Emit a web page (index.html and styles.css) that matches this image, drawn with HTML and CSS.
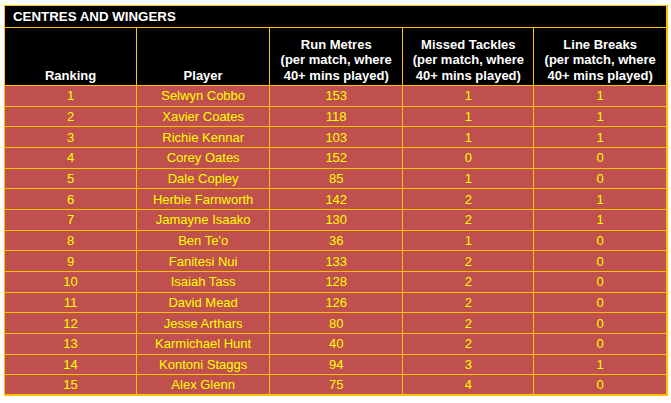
FILE: index.html
```html
<!DOCTYPE html>
<html>
<head>
<meta charset="utf-8">
<link rel="stylesheet" href="styles.css">
</head>
<body>
<table class="stats">
  <colgroup>
    <col class="c1"><col class="c2"><col class="c3"><col class="c4"><col class="c5">
  </colgroup>
  <thead>
    <tr class="title-row"><th colspan="5" class="title">CENTRES AND WINGERS</th></tr>
    <tr class="head-row">
      <th>Ranking</th>
      <th>Player</th>
      <th>Run Metres<br>(per match, where<br>40+ mins played)</th>
      <th>Missed Tackles<br>(per match, where<br>40+ mins played)</th>
      <th class="last">Line Breaks<br>(per match, where<br>40+ mins played)</th>
    </tr>
  </thead>
  <tbody>
    <tr><td>1</td><td>Selwyn Cobbo</td><td>153</td><td>1</td><td class="last">1</td></tr>
    <tr><td>2</td><td>Xavier Coates</td><td>118</td><td>1</td><td class="last">1</td></tr>
    <tr><td>3</td><td>Richie Kennar</td><td>103</td><td>1</td><td class="last">1</td></tr>
    <tr><td>4</td><td>Corey Oates</td><td>152</td><td>0</td><td class="last">0</td></tr>
    <tr><td>5</td><td>Dale Copley</td><td>85</td><td>1</td><td class="last">0</td></tr>
    <tr><td>6</td><td>Herbie Farnworth</td><td>142</td><td>2</td><td class="last">1</td></tr>
    <tr><td>7</td><td>Jamayne Isaako</td><td>130</td><td>2</td><td class="last">1</td></tr>
    <tr><td>8</td><td>Ben Te'o</td><td>36</td><td>1</td><td class="last">0</td></tr>
    <tr><td>9</td><td>Fanitesi Nui</td><td>133</td><td>2</td><td class="last">0</td></tr>
    <tr><td>10</td><td>Isaiah Tass</td><td>128</td><td>2</td><td class="last">0</td></tr>
    <tr><td>11</td><td>David Mead</td><td>126</td><td>2</td><td class="last">0</td></tr>
    <tr><td>12</td><td>Jesse Arthars</td><td>80</td><td>2</td><td class="last">0</td></tr>
    <tr><td>13</td><td>Karmichael Hunt</td><td>40</td><td>2</td><td class="last">0</td></tr>
    <tr><td>14</td><td>Kontoni Staggs</td><td>94</td><td>3</td><td class="last">1</td></tr>
    <tr class="final"><td>15</td><td>Alex Glenn</td><td>75</td><td>4</td><td class="last">0</td></tr>
  </tbody>
</table>
</body>
</html>
```
FILE: styles.css
```css
html, body {
  margin: 0;
  padding: 0;
  background: #ffffff;
}
body {
  padding: 5px 0 0 4px;
  font-family: "Liberation Sans", Arial, sans-serif;
  font-size: 13px;
}
.stats {
  border-collapse: collapse;
  table-layout: fixed;
  width: 664px;
  border: 1px solid #ffc000;
}
.c1 { width: 132px; }
.c2 { width: 133px; }
.c3 { width: 133px; }
.c4 { width: 131px; }
.c5 { width: 133px; }
.stats th, .stats td {
  border: 1px solid #ffc000;
  padding: 0 2px;
  text-align: center;
  white-space: nowrap;
  overflow: hidden;
}
.title-row th {
  background: #000000;
  color: #ffffff;
  font-weight: bold;
  text-align: left;
  padding: 0 0 0 8px;
  height: 21px;
  font-size: 13.3px;
  vertical-align: middle;
}
.head-row th {
  background: #000000;
  color: #ffffff;
  font-weight: bold;
  height: 55px;
  line-height: 15.5px;
  vertical-align: bottom;
  padding-bottom: 2px;
}
.stats tbody tr {
  height: 20.66px;
}
.stats td {
  background: #c0504d;
  color: #ffff00;
  vertical-align: middle;
  line-height: 15px;
}
.stats .last {
  border-right-width: 2px;
}
.stats tr.final td {
  border-bottom-width: 2px;
}
.stats .title {
  border-right-width: 2px;
}
```
